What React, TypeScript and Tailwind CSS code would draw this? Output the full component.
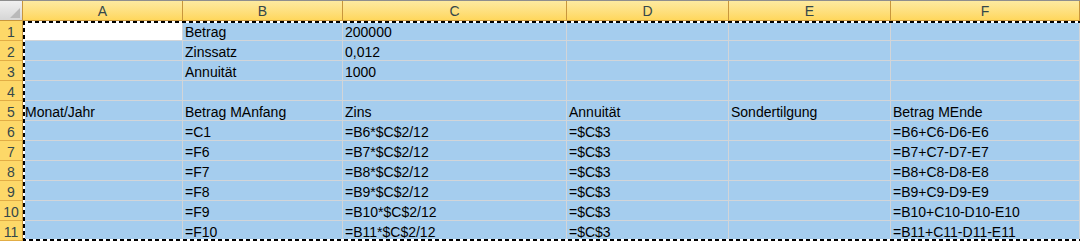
import React from 'react';

type Row = [string, string, string, string, string, string];

const columns = ['A', 'B', 'C', 'D', 'E', 'F'];

const rows: Row[] = [
  ['', 'Betrag', '200000', '', '', ''],
  ['', 'Zinssatz', '0,012', '', '', ''],
  ['', 'Annuität', '1000', '', '', ''],
  ['', '', '', '', '', ''],
  ['Monat/Jahr', 'Betrag MAnfang', 'Zins', 'Annuität', 'Sondertilgung', 'Betrag MEnde'],
  ['', '=C1', '=B6*$C$2/12', '=$C$3', '', '=B6+C6-D6-E6'],
  ['', '=F6', '=B7*$C$2/12', '=$C$3', '', '=B7+C7-D7-E7'],
  ['', '=F7', '=B8*$C$2/12', '=$C$3', '', '=B8+C8-D8-E8'],
  ['', '=F8', '=B9*$C$2/12', '=$C$3', '', '=B9+C9-D9-E9'],
  ['', '=F9', '=B10*$C$2/12', '=$C$3', '', '=B10+C10-D10-E10'],
  ['', '=F10', '=B11*$C$2/12', '=$C$3', '', '=B11+C11-D11-E11'],
];

export default function App() {
  return (
    <div
      className="relative w-[1080px] h-[241px] overflow-hidden bg-white border-t border-[#8e8e8e] text-[14px] leading-[16px] text-black"
      style={{ fontFamily: '"Liberation Sans", Arial, sans-serif' }}
    >
      <div className="grid grid-cols-[23px_160px_160px_224px_162px_162px_1fr] auto-rows-[20px]">
        {/* corner */}
        <div className="relative h-[20px] bg-gradient-to-b from-[#f0f0f0] to-[#d6d6d6] border-r border-b border-[#c8963c]">
          <svg className="absolute right-[2px] bottom-[2px]" width="10" height="10" viewBox="0 0 10 10">
            <polygon points="10,0 10,10 0,10" fill="#b9b9b9" />
          </svg>
        </div>
        {columns.map(c => (
          <div
            key={c}
            className="h-[20px] flex items-end justify-center pb-[1px] bg-gradient-to-b from-[#fdeaa0] to-[#ffd75c] border-r border-b border-[#c8963c] text-[#34474a]"
          >
            {c}
          </div>
        ))}

        {rows.map((row, i) => (
          <React.Fragment key={i}>
            <div className="h-[20px] flex items-end justify-center bg-[#fdd868] border-r border-r-[#c8963c] border-b border-b-[#e2ad45] text-[#34474a]">
              {i + 1}
            </div>
            {row.map((v, j) => (
              <div
                key={j}
                className={`h-[20px] flex items-end pl-[2px] whitespace-nowrap overflow-hidden border-r border-b border-[#d2d5d8] ${
                  i === 0 && j === 0 ? 'bg-white' : 'bg-[#a5cdee]'
                }`}
              >
                {v}
              </div>
            ))}
          </React.Fragment>
        ))}
      </div>

      {/* copy marquee */}
      <svg className="absolute left-0 top-0 pointer-events-none" width="1080" height="241">
        <g fill="none" strokeWidth="2">
          <path d="M1082 21 H24 V239 H1082" stroke="#ffffff" />
          <path d="M1082 21 H24 V239 H1082" stroke="#000000" strokeDasharray="4 3" />
        </g>
      </svg>
    </div>
  );
}
